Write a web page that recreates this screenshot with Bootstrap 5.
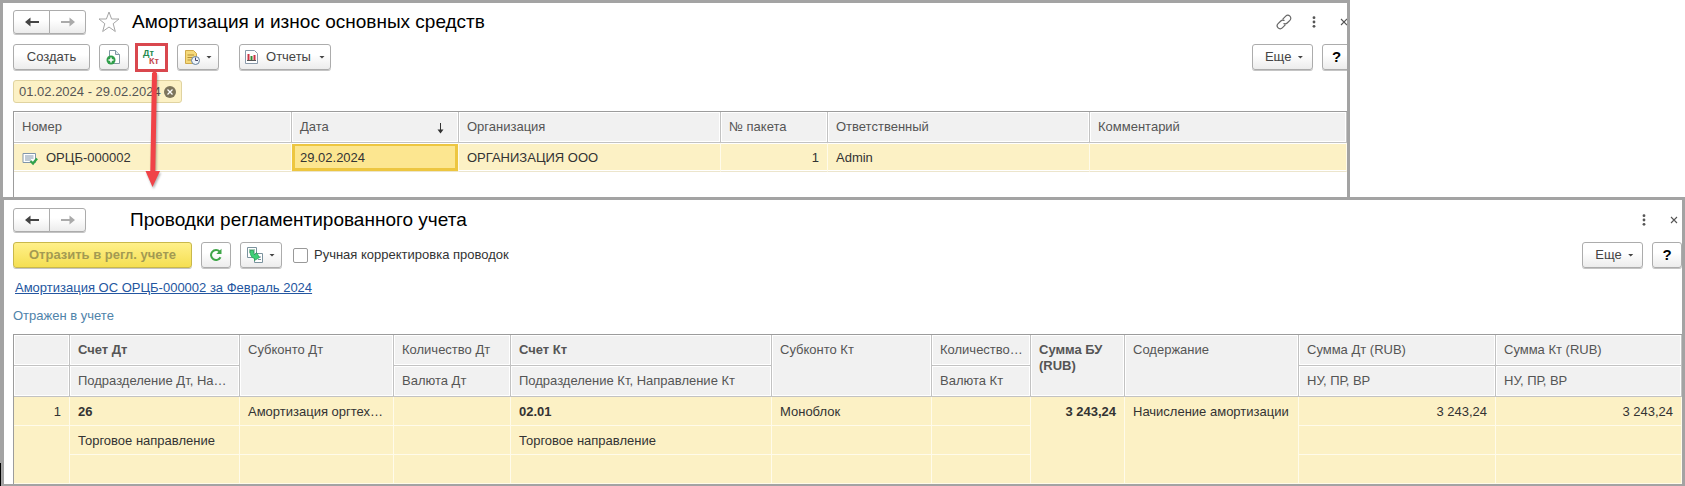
<!DOCTYPE html>
<html lang="ru">
<head>
<meta charset="utf-8">
<meta name="viewport" content="width=device-width, initial-scale=1">
<title>Амортизация и износ основных средств</title>
<link href="https://cdn.jsdelivr.net/npm/bootstrap@5.3.0/dist/css/bootstrap.min.css" rel="stylesheet">
<style>
  body { font-family: "Liberation Sans", Arial, sans-serif; font-size: 13px; line-height: 16px; color: #333; background: #fff; }
  svg { display: block; flex: none; }
  .pane { border: 3px solid #a3a3a3; background: #fff; }
  .pane-list { width: 80.1%; border-bottom: 0; padding: 7px 0 0 10px; overflow: hidden; }
  .pane-entries { border-left-width: 4px; padding: 8px 0 0 9px; position: relative; }
  .edge-mark { position: absolute; left: -4px; bottom: -3px; width: 1px; height: 24px; background: #000; }
  .bleed { margin-right: -5px; }
  .pane-head { height: 24px; margin-bottom: 10px; }
  .bar { height: 26px; gap: 9px; }
  .pane-title { font-size: 19px; line-height: 24px; color: #000; font-weight: 400; margin: 0; }
  .title-offset { margin-left: 44px; }
  .tool { --bs-btn-color: #444; --bs-btn-font-size: 13px; --bs-btn-line-height: 16px; --bs-btn-padding-x: 0; --bs-btn-padding-y: 0;
    --bs-btn-border-color: #acacac; --bs-btn-border-radius: 3px; --bs-btn-hover-border-color: #999; --bs-btn-hover-color: #222;
    height: 26px; display: inline-flex; align-items: center; justify-content: center; white-space: nowrap;
    background: linear-gradient(#fff 40%, #ececec); box-shadow: 0 1px 0 #c4c4c4; }
  .tool-icon { width: 30px; }
  .tool-help { font-size: 15px; font-weight: 700; color: #000; }
  .tool-drop { width: 42px; gap: 6px; }
  .tool-create { width: 77px; }
  .tool-reports { width: 92px; gap: 8px; margin-left: 11px; }
  .tool-more { width: 61px; gap: 6px; padding-left: 4px; }
  .tool-nav { width: 37px; height: 24px; }
  .caret { width: 6px; height: 3px; background: #444; clip-path: polygon(0 0, 100% 0, 50% 100%); }
  .tool-main { width: 179px; font-weight: 700; --bs-btn-color: #a39a52; --bs-btn-border-color: #c9b84b; background: linear-gradient(#fff08a, #f5df52); }
  .marked-box { margin-left: -3px; }
  .marked { border: 3px solid #d9474e; width: 33px; height: 29px; border-radius: 0; box-shadow: none; background: #fff; padding: 0; }
  .glyph-btn { border: 0; background: none; padding: 0; color: #555; }
  .pointer { position: absolute; left: 8px; top: 28px; z-index: 2; filter: drop-shadow(1px 2px 1px rgba(0,0,0,.3)); pointer-events: none; }
  .period-row { margin: 10px 0 8px; }
  .period { height: 23px; background: #fcf1c5; border: 1px solid #e0d3a0; border-radius: 3px; padding: 0 5px; gap: 3px; color: #555; }
  .links { margin: 12px 0 12px 2px; }
  .state { color: #4f83aa; margin-bottom: 10px; }
  .grid-wrap { border-top: 1px solid #9c9c9c; border-left: 1px solid #9c9c9c; }
  .grid-list-wrap { padding-bottom: 25px; }
  .grid { width: 100%; table-layout: fixed; border-collapse: separate; border-spacing: 0; }
  .grid th, .grid td { padding: 7px 8px 0; vertical-align: top; white-space: nowrap; overflow: hidden; text-overflow: ellipsis; }
  .grid th { height: 31px; padding-right: 4px; font-weight: 400; color: #555; background: #f1f1f1; border-right: 1px solid #c2c2c2; border-bottom: 1px solid #c2c2c2; box-shadow: inset 1px 1px #fff, inset -1px -1px #fff; }
  .grid td { height: 29px; background: #fcf1c5; border-right: 1px solid #fffbea; border-bottom: 1px solid #fffbea; }
  .grid-list td { border-bottom-color: #ece5cc; box-shadow: inset 0 1px #fff, inset 0 -1px #fff; }
  .grid-list td.picked { background: #fce690; box-shadow: inset 0 1px #fff, inset 0 0 0 3px #edc640; }
  .grid .strong { font-weight: 700; }
  .grid .two-line { white-space: normal; }
  .sort-gap { padding-right: 10px; }
  .doc-link { color: #2456a0; }
  .manual { gap: 6px; margin-left: 2px; }
  .manual .form-check-input { width: 15px; height: 15px; border: 1px solid #999; border-radius: 2px; margin: 0; float: none; }
</style>
</head>
<body>
<main>
  <section class="pane pane-list">
    <header class="pane-head d-flex align-items-center bleed">
      <div class="btn-group">
        <button class="btn tool tool-nav" type="button" aria-label="Назад"><svg width="14" height="10" viewBox="0 0 14 10"><path d="M0 5 5.500 .5V4H14V6H5.500V9.500z" fill="#444"/></svg></button>
        <button class="btn tool tool-nav" type="button" aria-label="Вперед"><svg width="14" height="10" viewBox="0 0 14 10"><path d="M14 5 8.500 .5V4H0V6H8.500V9.500z" fill="#aaa"/></svg></button>
      </div>
      <button class="glyph-btn ms-2" type="button" aria-label="В избранное"><svg class="mx-1" width="22" height="22" viewBox="0 0 22 22"><path d="M11 1 13.600 8H21L15.200 12.700 17.300 20.500 11 16 4.700 20.500 6.800 12.700 1 8H8.400z" fill="#fff" stroke="#a5a5a5"/></svg></button>
      <h1 class="pane-title ms-2 flex-grow-1">Амортизация и износ основных средств</h1>
      <div class="d-flex align-items-center">
        <button class="glyph-btn" type="button" aria-label="Ссылка"><svg width="16" height="16" viewBox="0 0 16 16" fill="none" stroke="#666" stroke-width="1.200" stroke-linecap="round"><path d="M7 4.800 9.700 2.100C10.900.9 12.700.9 13.900 2.100 15.100 3.300 15.100 5.100 13.900 6.300L11.200 9C10.300 9.900 9 10.100 8 9.600M9 11.200 6.300 13.900C5.100 15.100 3.300 15.100 2.100 13.900.9 12.700.9 10.900 2.100 9.700L4.800 7C5.700 6.100 7 5.900 8 6.400"/></svg></button>
        <button class="glyph-btn ms-3 px-1" type="button" aria-label="Меню"><svg width="4" height="12" viewBox="0 0 4 12" fill="#555"><circle cx="2" cy="1.700" r="1.400"/><circle cx="2" cy="6" r="1.400"/><circle cx="2" cy="10.300" r="1.400"/></svg></button>
        <button class="glyph-btn px-1 ms-3" type="button" aria-label="Закрыть"><svg width="8" height="8" viewBox="0 0 8 8"><path d="M1 1 7 7M7 1 1 7" stroke="#555" stroke-width="1.100"/></svg></button>
      </div>
    </header>

    <div class="bar d-flex align-items-center bleed">
      <button class="btn tool tool-create" type="button">Создать</button>
      <button class="btn tool tool-icon" type="button" aria-label="Создать копированием"><svg width="16" height="16" viewBox="0 0 16 16"><path d="M3.500 1.500H9.500L13.500 5.500V14.500H3.500z" fill="#fff" stroke="#8196a5"/><path d="M9.500 1.500V5.500H13.500" fill="#dfe8ed" stroke="#8196a5"/><circle cx="5" cy="11" r="4.500" fill="#2f9e4a"/><path d="M5 8.500V13.500M2.500 11H7.500" stroke="#fff" stroke-width="1.500"/></svg></button>
      <div class="position-relative marked-box">
        <button class="btn tool marked" type="button" aria-label="Проводки"><svg width="19" height="18" viewBox="0 0 19 18" font-family="Liberation Sans, Arial, sans-serif" font-size="9" font-weight="700"><text x="1" y="8" fill="#248a4c">Дт</text><text x="7" y="16" fill="#c5484b">Кт</text></svg></button>
        <svg class="pointer" width="20" height="118" viewBox="0 0 20 118" fill="#f04348"><path d="M9 2Q11.500-1 14 2L12.300 100H17L9.500 116 2.500 100H7.300z"/></svg>
      </div>
      <button class="btn tool tool-drop" type="button" aria-label="Создать на основании"><svg width="16" height="16" viewBox="0 0 16 16"><path d="M1.500 1.500H9.500L12.500 4.500V14.500H1.500z" fill="#f5d97a" stroke="#d0a94a"/><path d="M3.500 6H10M3.500 8.500H8M3.500 11H7" stroke="#b58f36"/><circle cx="11.500" cy="11.500" r="4" fill="#eef4fb" stroke="#64809d"/><path d="M11.500 8.500V11.500H14" fill="none" stroke="#446"/></svg><span class="caret"></span></button>
      <button class="btn tool tool-reports" type="button"><svg width="13" height="14" viewBox="0 0 13 14"><path d="M.5.5H9.500L12.500 3.500V13.500H.5z" fill="#fff" stroke="#8a9aaa"/><path d="M3.500 10V4" stroke="#c34" stroke-width="2"/><path d="M6.500 10V6" stroke="#383" stroke-width="2"/><path d="M9.500 10V5" stroke="#c34" stroke-width="2"/><path d="M2 10.500H11" stroke="#555"/></svg><span>Отчеты</span><span class="caret"></span></button>
      <div class="ms-auto d-flex bar">
        <button class="btn tool tool-more" type="button">Еще<span class="caret"></span></button>
        <button class="btn tool tool-icon tool-help" type="button" aria-label="Справка">?</button>
      </div>
    </div>

    <div class="period-row d-flex"><div class="period d-flex align-items-center">
      <span>01.02.2024 - 29.02.2024</span>
      <button class="glyph-btn" type="button" aria-label="Сбросить период"><svg width="12" height="12" viewBox="0 0 12 12"><circle cx="6" cy="6" r="6" fill="#7d755c"/><path d="M3.500 3.500 8.500 8.500M8.500 3.500 3.500 8.500" stroke="#fff" stroke-width="1.300"/></svg></button>
    </div></div>

    <div class="grid-wrap grid-list-wrap">
      <table class="grid grid-list">
        <colgroup><col style="width:278px"><col style="width:167px"><col style="width:262px"><col style="width:107px"><col style="width:262px"><col></colgroup>
        <thead><tr>
          <th>Номер</th>
          <th><span class="d-flex justify-content-between sort-gap">Дата <svg class="mt-1" width="7" height="11" viewBox="0 0 7 11"><path d="M3.500 0V9" stroke="#333"/><path d="M.5 6.500H6.500L3.500 10.500z" fill="#333"/></svg></span></th>
          <th>Организация</th><th>№ пакета</th><th>Ответственный</th><th>Комментарий</th>
        </tr></thead>
        <tbody><tr>
          <td><span class="d-flex gap-2"><svg width="16" height="16" viewBox="0 0 16 16"><path d="M1 3.500H13.500V12.500H1z" fill="#fff" stroke="#8095aa"/><path d="M3 6H11.500M3 8H11.500M3 10H9" stroke="#8095aa"/><path d="M8.500 11 11 13.500 15 8.500" fill="none" stroke="#31a24b" stroke-width="2.300"/></svg>ОРЦБ-000002</span></td>
          <td class="picked">29.02.2024</td><td>ОРГАНИЗАЦИЯ ООО</td><td class="text-end">1</td><td>Admin</td><td></td>
        </tr></tbody>
      </table>
    </div>
  </section>

  <section class="pane pane-entries">
    <span class="edge-mark"></span>
    <header class="pane-head d-flex align-items-center">
      <div class="btn-group">
        <button class="btn tool tool-nav" type="button" aria-label="Назад"><svg width="14" height="10" viewBox="0 0 14 10"><path d="M0 5 5.500 .5V4H14V6H5.500V9.500z" fill="#444"/></svg></button>
        <button class="btn tool tool-nav" type="button" aria-label="Вперед"><svg width="14" height="10" viewBox="0 0 14 10"><path d="M14 5 8.500 .5V4H0V6H8.500V9.500z" fill="#aaa"/></svg></button>
      </div>
      <h2 class="pane-title flex-grow-1 title-offset">Проводки регламентированного учета</h2>
      <button class="glyph-btn px-1" type="button" aria-label="Меню"><svg width="4" height="12" viewBox="0 0 4 12" fill="#555"><circle cx="2" cy="1.700" r="1.400"/><circle cx="2" cy="6" r="1.400"/><circle cx="2" cy="10.300" r="1.400"/></svg></button>
      <button class="glyph-btn px-1 ms-3" type="button" aria-label="Закрыть"><svg width="8" height="8" viewBox="0 0 8 8"><path d="M1 1 7 7M7 1 1 7" stroke="#555" stroke-width="1.100"/></svg></button>
    </header>

    <div class="bar d-flex align-items-center">
      <button class="btn tool tool-main" type="button">Отразить в регл. учете</button>
      <button class="btn tool tool-icon" type="button" aria-label="Обновить"><svg width="14" height="14" viewBox="0 0 14 14"><path d="M11.500 9.300A5 5 0 1 1 10.700 3.600" fill="none" stroke="#3fa648" stroke-width="2"/><path d="M12.500 .8V6H7.300z" fill="#3fa648"/></svg></button>
      <button class="btn tool tool-drop" type="button" aria-label="Заполнить"><svg width="16" height="16" viewBox="0 0 16 16"><path d="M.5.5H9.500V10.500H.5z" fill="#fff" stroke="#7b939e"/><path d="M2 3H8M2 5H8" stroke="#4a9a70"/><path d="M7.500 6.500H15.500V15.500H7.500z" fill="#fff" stroke="#7b939e"/><path d="M11 10H14M11 12.500H14" stroke="#7b939e"/><path d="M3 3.500H6.500V6.500L8 8 9.500 5.500 12.500 10.500 7.500 13.500 7.500 11.500Q3 10.500 3 3.500z" fill="#3fcf76" stroke="#249a50" stroke-width=".7"/></svg><span class="caret"></span></button>
      <div class="manual d-flex align-items-center"><input class="form-check-input" type="checkbox" id="manual"><label for="manual">Ручная корректировка проводок</label></div>
      <div class="ms-auto d-flex bar">
        <button class="btn tool tool-more" type="button">Еще<span class="caret"></span></button>
        <button class="btn tool tool-icon tool-help" type="button" aria-label="Справка">?</button>
      </div>
    </div>

    <div class="links"><a class="doc-link" href="#">Амортизация ОС ОРЦБ-000002 за Февраль 2024</a></div>
    <div class="state">Отражен в учете</div>

    <div class="grid-wrap">
      <table class="grid">
        <colgroup><col style="width:56px"><col style="width:170px"><col style="width:154px"><col style="width:117px"><col style="width:261px"><col style="width:160px"><col style="width:99px"><col style="width:94px"><col style="width:174px"><col style="width:197px"><col></colgroup>
        <thead>
          <tr><th></th><th class="strong">Счет Дт</th><th rowspan="2">Субконто Дт</th><th>Количество Дт</th><th class="strong">Счет Кт</th><th rowspan="2">Субконто Кт</th><th>Количество…</th><th rowspan="2" class="strong two-line">Сумма БУ (RUB)</th><th rowspan="2">Содержание</th><th>Сумма Дт (RUB)</th><th>Сумма Кт (RUB)</th></tr>
          <tr><th></th><th>Подразделение Дт, На…</th><th>Валюта Дт</th><th>Подразделение Кт, Направление Кт</th><th>Валюта Кт</th><th>НУ, ПР, ВР</th><th>НУ, ПР, ВР</th></tr>
        </thead>
        <tbody>
          <tr><td class="text-end">1</td><td class="strong">26</td><td>Амортизация оргтех…</td><td></td><td class="strong">02.01</td><td>Моноблок</td><td></td><td rowspan="3" class="strong text-end">3 243,24</td><td rowspan="3">Начисление амортизации</td><td class="text-end">3 243,24</td><td class="text-end">3 243,24</td></tr>
          <tr><td rowspan="2"></td><td>Торговое направление</td><td></td><td></td><td>Торговое направление</td><td></td><td></td><td></td><td></td></tr>
          <tr><td></td><td></td><td></td><td></td><td></td><td></td><td></td><td></td></tr>
        </tbody>
      </table>
    </div>
  </section>
</main>
<script src="https://cdn.jsdelivr.net/npm/bootstrap@5.3.0/dist/js/bootstrap.bundle.min.js"></script>
</body>
</html>
